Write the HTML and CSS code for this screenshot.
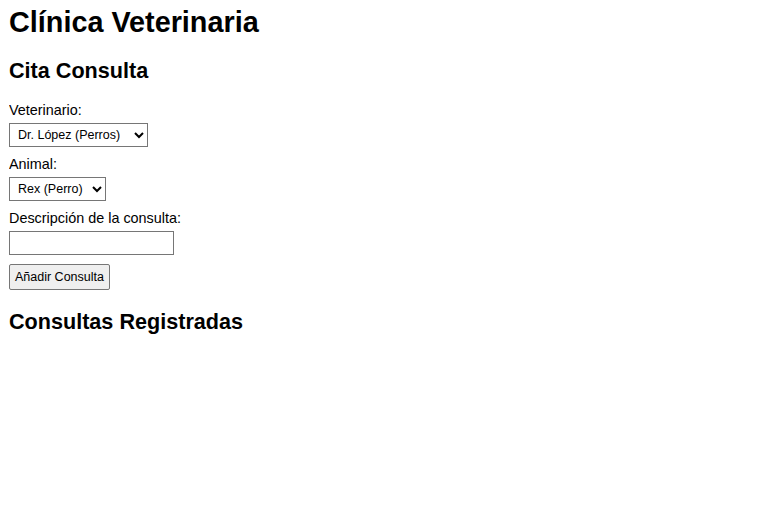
FILE: index.html
```html
<!DOCTYPE html>
<html lang="es">
<head>
<meta charset="utf-8">
<title>Clínica Veterinaria</title>
<link rel="stylesheet" href="styles.css">
</head>
<body>
<h1 class="title">Clínica Veterinaria</h1>
<h2 class="section">Cita Consulta</h2>
<form class="form">
  <div class="field">
    <label class="label" for="vet">Veterinario:</label>
    <select class="control select-vet" id="vet">
      <option>Dr. López (Perros)</option>
    </select>
  </div>
  <div class="field">
    <label class="label" for="animal">Animal:</label>
    <select class="control select-animal" id="animal">
      <option>Rex (Perro)</option>
    </select>
  </div>
  <div class="field">
    <label class="label" for="desc">Descripción de la consulta:</label>
    <input class="control text" id="desc" type="text">
  </div>
  <button class="btn" type="button">Añadir Consulta</button>
</form>
<h2 class="section section-list">Consultas Registradas</h2>
<ul class="list"></ul>
</body>
</html>
```
FILE: styles.css
```css
body {
  margin: 5.5px 9px 0;
  font-family: "Liberation Sans", Arial, sans-serif;
  font-size: 14.4px;
  color: #000;
  background: #fff;
}
.title {
  font-size: 28.8px;
  font-weight: bold;
  margin: 0 0 19.3px;
}
.section {
  font-size: 21.6px;
  font-weight: bold;
  margin: 0 0 18.6px;
}
.section-list {
  margin-top: 19.1px;
}
.form {
  display: flex;
  flex-direction: column;
  align-items: flex-start;
}
.field {
  display: flex;
  flex-direction: column;
  align-items: flex-start;
  gap: 4.5px;
  margin-bottom: 9px;
}
.field:last-of-type {
  margin-bottom: 8.3px;
}
.control {
  box-sizing: border-box;
  font-family: "Liberation Sans", Arial, sans-serif;
  font-size: 12.5px;
  height: 24.5px;
  margin: 0;
  padding: 0 4px;
  border: 1px solid #767676;
  border-radius: 0;
  background: #fff;
  color: #000;
}
.select-vet {
  width: 139px;
}
.select-animal {
  width: 97px;
}
.text {
  width: 165px;
}
.btn {
  box-sizing: border-box;
  font-family: "Liberation Sans", Arial, sans-serif;
  font-size: 12.5px;
  width: 101px;
  height: 26px;
  margin: 0;
  padding: 0 4px;
  border: 1px solid #767676;
  border-radius: 2px;
  background: #efefef;
  color: #000;
}
.list {
  margin: 0;
  padding: 0;
}
```
